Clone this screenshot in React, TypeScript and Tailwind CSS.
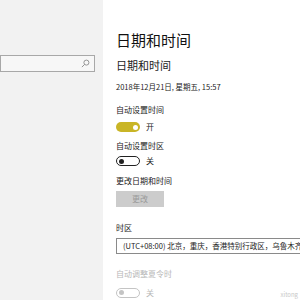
const font = "font-['Microsoft_YaHei','Noto_Sans_CJK_SC',sans-serif]"

const Toggle = ({ on, disabled }: { on?: boolean; disabled?: boolean }) => {
  if (on) {
    return (
      <div className="flex h-[10px] w-[24px] items-center justify-end rounded-full bg-[#c9b526] pr-[2px]">
        <div className="h-[5px] w-[5px] rounded-full bg-white" />
      </div>
    )
  }
  return (
    <div
      className={`flex h-[10px] w-[24px] items-center rounded-full border-[1.5px] pl-[2px] ${
        disabled ? "border-[#c4c4c4]" : "border-[#222]"
      }`}>
      <div className={`h-[5px] w-[5px] rounded-full ${disabled ? "bg-[#c4c4c4]" : "bg-[#222]"}`} />
    </div>
  )
}

const Label = ({ children, muted }: { children: React.ReactNode; muted?: boolean }) => (
  <div className={`h-[10px] text-[8px] leading-[10px] ${muted ? "text-[#b8b8b8]" : "text-[#222]"}`}>
    {children}
  </div>
)

export default function App() {
  return (
    <div className={`flex h-[300px] w-[300px] overflow-hidden bg-white ${font}`}>
      <aside className="h-full w-[103px] shrink-0 bg-[#f2f2f2] pt-[55px]">
        <div className="flex h-[17px] w-[95px] items-center justify-end border-[1.5px] border-[#a8a8a8] bg-[#f7f7f7] pr-[4px]">
          <svg width="9" height="9" viewBox="0 0 10 10" fill="none" stroke="#8a8a8a" strokeWidth="1">
            <circle cx="6" cy="4" r="2.8" />
            <path d="M4 6 L1 9" />
          </svg>
        </div>
      </aside>

      <main className="min-w-0 flex-1 pl-[13px] pt-[30px]">
        <h1 className="h-[20px] text-[15px] leading-[20px] text-[#111]">日期和时间</h1>
        <h2 className="mt-[8px] h-[14px] text-[11px] leading-[14px] text-[#222]">日期和时间</h2>
        <div className="mt-[10px] h-[10px] text-[7.5px] leading-[10px] text-[#222]">
          2018年12月21日, 星期五, 15:57
        </div>

        <div className="mt-[13px]">
          <Label>自动设置时间</Label>
        </div>
        <div className="mt-[7px] flex items-center gap-[6px]">
          <Toggle on />
          <span className="text-[8px] leading-[10px] text-[#222]">开</span>
        </div>

        <div className="mt-[9px]">
          <Label>自动设置时区</Label>
        </div>
        <div className="mt-[5px] flex items-center gap-[6px]">
          <Toggle />
          <span className="text-[8px] leading-[10px] text-[#222]">关</span>
        </div>

        <div className="mt-[10px]">
          <Label>更改日期和时间</Label>
        </div>
        <button className="mt-[5px] flex h-[16px] w-[48px] items-center justify-center bg-[#cccccc] text-[8px] text-[#9a9a9a]">
          更改
        </button>

        <div className="mt-[16px]">
          <Label>时区</Label>
        </div>
        <div className="mt-[5px] mr-[-20px] flex h-[16px] items-center overflow-hidden whitespace-nowrap border border-[#8a8a8a] pl-[6px] text-[7.5px] text-[#222]">
          (UTC+08:00) 北京，重庆，香港特别行政区，乌鲁木齐
        </div>

        <div className="mt-[15px]">
          <Label muted>自动调整夏令时</Label>
        </div>
        <div className="mt-[7px] flex items-center gap-[6px]">
          <Toggle disabled />
          <span className="text-[8px] leading-[10px] text-[#b8b8b8]">关</span>
          <span className="ml-auto mr-[2px] mt-[4px] text-[6px] text-[#c8c8c8]">xitong</span>
        </div>
      </main>
    </div>
  )
}
